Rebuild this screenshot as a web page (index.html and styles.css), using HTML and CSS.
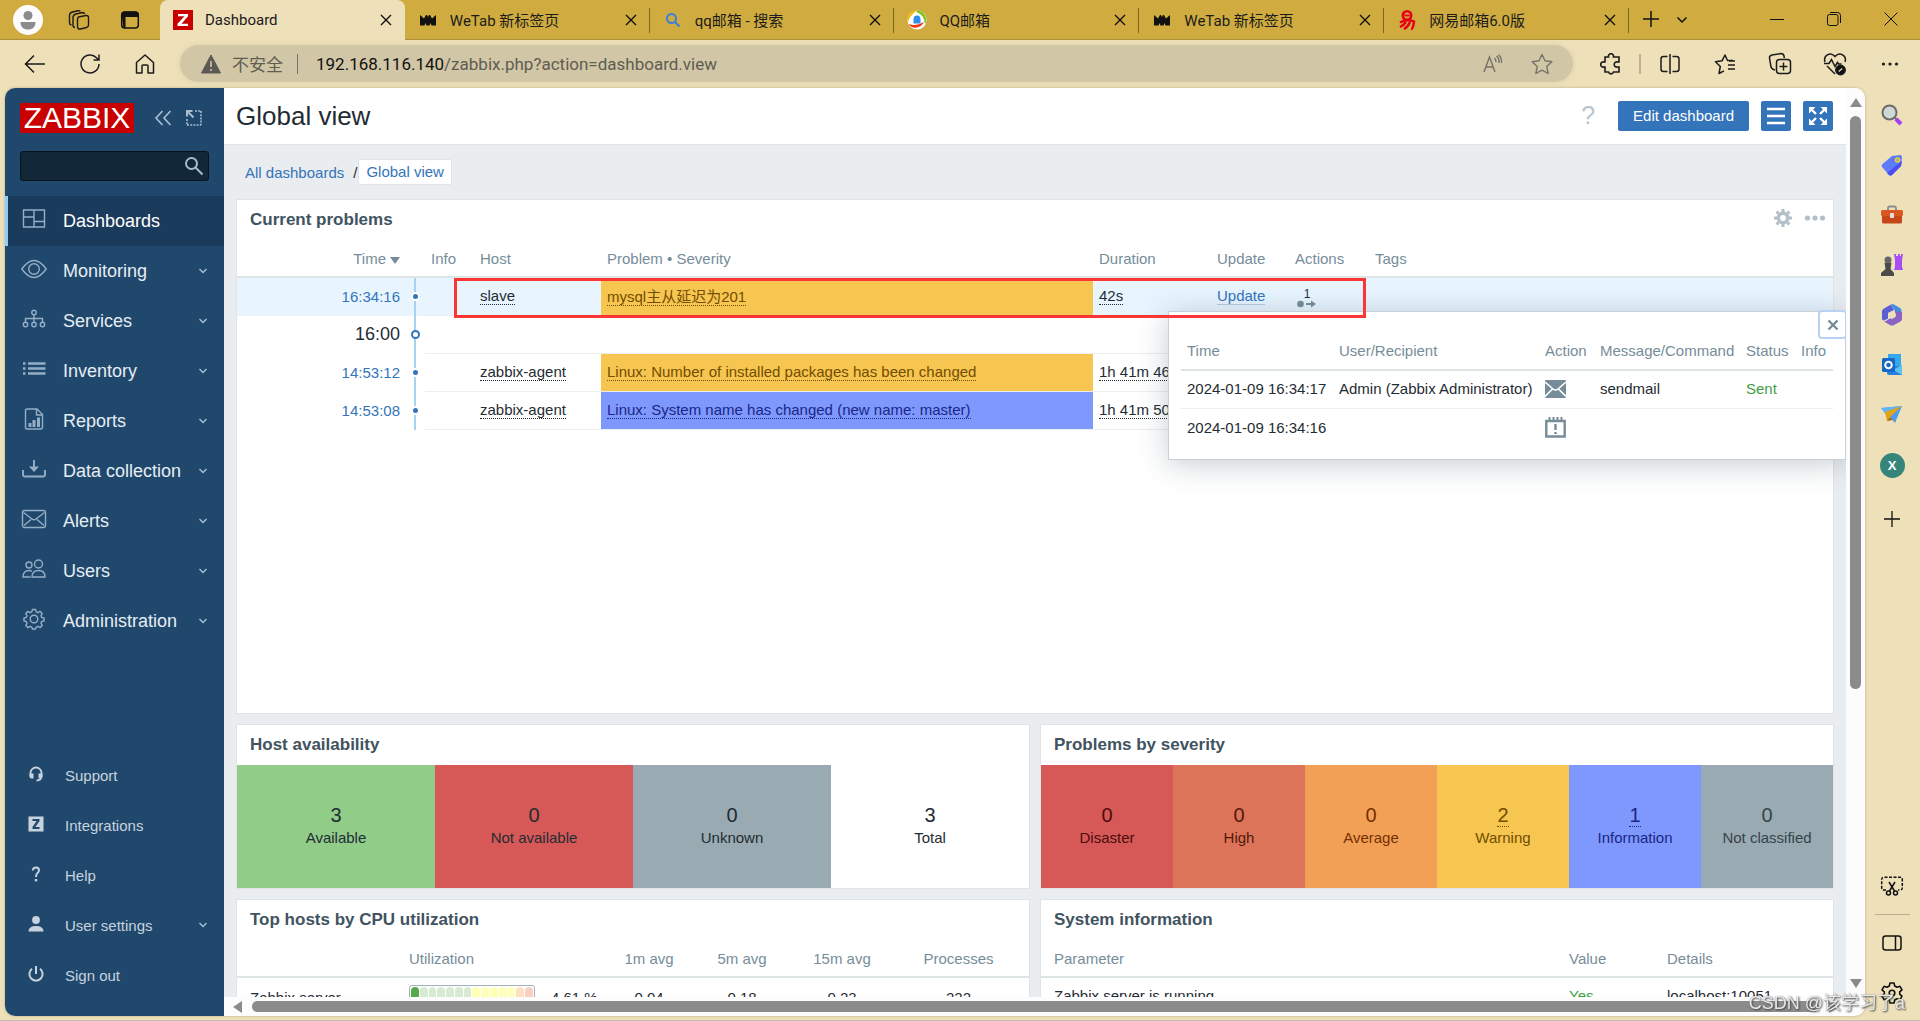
FILE: index.html
```html
<!DOCTYPE html>
<html lang="zh-CN">
<head>
<meta charset="utf-8">
<title>Dashboard</title>
<link rel="stylesheet" href="styles.css">
</head>
<body>
<svg class="defs" aria-hidden="true">
  <symbol id="close" viewBox="0 0 12 12"><path d="M1 1l10 10M11 1L1 11" fill="none" stroke="#111" stroke-width="1.4"/></symbol>
  <symbol id="down" viewBox="0 0 8 8"><path d="M.5 2l3.500 3.500L7.500 2" fill="none" stroke="#a9bfd1" stroke-width="1.4"/></symbol>
  <symbol id="wetab" viewBox="0 0 20 20"><path d="M2 5l4 3.500L8 5h1l1 2 1-2h1l2 3.500L18 5v10.500h-4.500L12.500 13l-1 2.500h-3L7.500 13l-1 2.500H2z" fill="#111"/></symbol>
</svg>

<header class="tabbar">
  <div class="lead">
    <button class="lead-btn" aria-label="Profile"><svg width="30" height="30" viewBox="0 0 30 30"><circle cx="15" cy="15" r="15" fill="#fdfdfd"/><circle cx="15" cy="10.500" r="4.500" fill="#8c8c8c"/><path d="M7.500 17h15c0 5-3 7.500-7.500 7.500S7.500 22 7.500 17z" fill="#8c8c8c"/></svg></button>
    <button class="lead-btn" aria-label="Workspaces"><svg width="22" height="22" viewBox="0 0 22 22" fill="none" stroke="#1b1b1b" stroke-width="1.400"><path d="M10.500 8l7.500-1.500q2.500-.3 2.500 2v7.500q0 2-2 2.500l-6 1.500q-3 .5-3-2.500v-7q0-2 1-2.500z"/><path d="M7 18.500c-1.500 0-2-1-2-2.500V8.500c0-2 1-3 3-3.500l6.500-1.500c1.500 0 2 .8 2.200 1.500M3.500 16c-1.500-.3-2-1-2-2.500V6.500c0-2 1-3 3-3.500L10 1.700c1.200-.2 1.900 0 2.300.6"/></svg></button>
    <button class="lead-btn" aria-label="Tab actions"><svg width="20" height="20" viewBox="0 0 20 20"><rect x="1.700" y="2" width="16.600" height="16" rx="3" fill="none" stroke="#111" stroke-width="1.500"/><path d="M1.500 7V4.500Q1.500 1.500 4.500 1.500h11q3 0 3 3V7zM2 7h3.500v11H3.500Z" fill="#111"/></svg></button>
  </div>
  <nav class="tabs">
    <div class="tab active"><svg class="fav" viewBox="0 0 20 20"><rect width="20" height="20" fill="#c80000"/><path d="M5 4h10v2.300L8.500 13.700H15V16H4.500v-2.300L11.500 6.300H5z" fill="#fff"/></svg><span>Dashboard</span><button class="x" aria-label="Close tab"><svg><use href="#close"/></svg></button></div>
    <div class="tab"><svg class="fav"><use href="#wetab"/></svg><span>WeTab 新标签页</span><button class="x" aria-label="Close tab"><svg><use href="#close"/></svg></button></div>
    <div class="tab"><svg class="fav" viewBox="0 0 20 20"><circle cx="8.500" cy="8.500" r="4.500" fill="none" stroke="#3b7ddd" stroke-width="2"/><path d="M12 12l4.500 4.500" stroke="#3b7ddd" stroke-width="2"/></svg><span>qq邮箱 - 搜索</span><button class="x" aria-label="Close tab"><svg><use href="#close"/></svg></button></div>
    <div class="tab"><svg class="fav" viewBox="0 0 20 20"><circle cx="10" cy="10" r="9.500" fill="#fff"/><path d="M10 .5a9.500 9.500 0 0 0-9 12.500C1.500 8 5 4 10 .5z" fill="#f6b800"/><path d="M10 .5a9.500 9.500 0 0 1 8 14C17.500 8 15 4 9 2z" fill="#7ac520"/><path d="M2 14c5 2 9 1 15-2a9.500 9.500 0 0 1-14 4z" fill="#f03a14"/><path d="M6.500 13.500v-4a3.500 4 0 0 1 7 0v4z" fill="#2f8fe8"/></svg><span>QQ邮箱</span><button class="x" aria-label="Close tab"><svg><use href="#close"/></svg></button></div>
    <div class="tab"><svg class="fav"><use href="#wetab"/></svg><span>WeTab 新标签页</span><button class="x" aria-label="Close tab"><svg><use href="#close"/></svg></button></div>
    <div class="tab"><svg class="fav" viewBox="0 0 20 20" fill="none" stroke="#e60012"><circle cx="10" cy="5.500" r="4.200" stroke-width="2.600"/><path d="M7.500 5.500h5" stroke-width="1.800"/><path d="M3 12.500q7-4 14-1-1 8-3 7.500M9 12q-2 3-6 5M13 12q-2 5-6 7" stroke-width="2.400"/></svg><span>网易邮箱6.0版</span><button class="x" aria-label="Close tab"><svg><use href="#close"/></svg></button></div>
  </nav>
  <div class="newtab">
    <button aria-label="New tab"><svg width="18" height="18" viewBox="0 0 18 18"><path d="M9 1v16M1 9h16" stroke="#111" stroke-width="1.500"/></svg></button>
    <button aria-label="Tab list"><svg width="12" height="12" viewBox="0 0 12 12"><path d="M1.500 4.500L6 9l4.500-4.500" fill="none" stroke="#111" stroke-width="1.500"/></svg></button>
  </div>
  <div class="winctl">
    <button aria-label="Minimize"><svg width="14" height="14" viewBox="0 0 14 14"><path d="M0 7.500h14" stroke="#111"/></svg></button>
    <button aria-label="Restore"><svg width="14" height="14" viewBox="0 0 14 14" fill="none" stroke="#111"><rect x=".5" y="2.500" width="10.500" height="11" rx="2"/><path d="M3 .5h7.500q3 0 3 3V11"/></svg></button>
    <button aria-label="Close"><svg width="14" height="14" viewBox="0 0 14 14"><path d="M.5.5l13 13M13.500.5L.5 13.500" stroke="#111"/></svg></button>
  </div>
</header>

<div class="toolbar">
  <button class="tool" aria-label="Back"><svg width="22" height="22" viewBox="0 0 22 22" fill="none" stroke="#1b1b1b" stroke-width="1.500"><path d="M21 11H2M10 2.500L1.500 11l8.500 8.500"/></svg></button>
  <button class="tool" aria-label="Refresh"><svg width="22" height="22" viewBox="0 0 22 22" fill="none" stroke="#1b1b1b" stroke-width="1.500"><path d="M20 11a9 9 0 1 1-2.500-6.300L20 7M20 1.500V7h-5.500"/></svg></button>
  <button class="tool" aria-label="Home"><svg width="22" height="22" viewBox="0 0 22 22" fill="none" stroke="#1b1b1b" stroke-width="1.500" stroke-linejoin="round"><path d="M2.500 9.500L11 2l8.500 7.500V20H14v-7q0-1-1-1H9q-1 0-1 1v7H2.500z"/></svg></button>
  <div class="address">
    <svg width="20" height="20" viewBox="0 0 20 20"><path d="M10 1l9.500 18H.5z" fill="#5b5a55" stroke="#5b5a55" stroke-linejoin="round"/><path d="M10 7v6M10 15v2" stroke="#d1c6a5" stroke-width="1.600"/></svg>
    <span class="insecure">不安全</span><span class="bar"></span>
    <span class="url"><b>192.168.116.140</b>/zabbix.php?action=dashboard.view</span>
    <button class="in" aria-label="Read aloud"><svg width="20" height="20" viewBox="0 0 20 20" fill="none" stroke="#77736a" stroke-width="1.400"><path d="M1 18L6.500 3 12 18M3 13h7M11.500 4q1.500 1.500 1.500 4M13.500 2q3 2.500 2.500 7M15.500.8q3.500 3.200 3 8"/></svg></button>
    <button class="in" aria-label="Favorite"><svg width="22" height="22" viewBox="0 0 22 22" fill="none" stroke="#77736a" stroke-width="1.400" stroke-linejoin="round"><path d="M11 1.500l3 6.300 6.800 1-5 4.800 1.300 6.900L11 17.200l-6.100 3.300 1.300-6.900-5-4.800 6.800-1z"/></svg></button>
  </div>
  <button class="tool" aria-label="Extensions"><svg width="22" height="22" viewBox="0 0 22 22" fill="none" stroke="#1b1b1b" stroke-width="1.600"><path d="M5 4h3.500a2.600 2.600 0 1 1 5 0H19v5h-1.500a2.600 2.600 0 1 0 0 5H19v5h-5.500a2.600 2.600 0 0 1-5 0H5v-5H4a2.600 2.600 0 1 1 0-5h1z"/></svg></button>
  <span class="tsep"></span>
  <button class="tool" aria-label="Split screen"><svg width="22" height="22" viewBox="0 0 22 22" fill="none" stroke="#1b1b1b" stroke-width="1.500"><path d="M11 1v20M8.500 3.500h-4Q2 3.500 2 6v10q0 2.500 2.500 2.500h4M13.500 3.500h4Q20 3.500 20 6v10q0 2.500-2.500 2.500h-4"/></svg></button>
  <button class="tool" aria-label="Favorites"><svg width="22" height="22" viewBox="0 0 22 22" fill="none" stroke="#1b1b1b" stroke-width="1.500" stroke-linejoin="round"><path d="M19 7.500h-5.500L11 2 8 7.800l-6.500 1 4.800 4.700L5 20.500l5-2.700M14 12h7M14 16h7M15 8h6"/></svg></button>
  <button class="tool" aria-label="Collections"><svg width="24" height="24" viewBox="0 0 24 24" fill="none" stroke="#1b1b1b" stroke-width="1.500"><path d="M7 18l-2-.7Q3.500 16.500 3 15L1.500 6Q1.300 3.500 4 3l9-1.500q2.500 0 3 2.500l.3 2"/><rect x="8.500" y="7.500" width="14" height="14" rx="3"/><path d="M15.500 10.500v8M11.500 14.500h8"/></svg></button>
  <button class="tool" aria-label="Browser essentials"><svg width="24" height="24" viewBox="0 0 24 24" fill="none" stroke="#1b1b1b" stroke-width="1.500"><path d="M2 10C0 4 7-1 12 4.500 17-1 24 4 22 10M1 11.500h5l2.500-4 3.500 7 2.500-4 1 1.500h3M4 14l8 8"/><circle cx="17.500" cy="18" r="4.700" fill="#111"/><path d="M15.800 19.500l3.400-3" stroke="#eee1ba" stroke-width="1.200"/></svg></button>
  <button class="tool" aria-label="More"><svg width="18" height="18" viewBox="0 0 18 18" fill="#1b1b1b"><circle cx="2.500" cy="9" r="1.600"/><circle cx="9" cy="9" r="1.600"/><circle cx="15.500" cy="9" r="1.600"/></svg></button>
</div>

<div class="window">
  <div class="page">
    <aside class="sidebar">
      <div class="brand"><a class="logo" href="#">ZABBIX</a>
        <button aria-label="Collapse sidebar"><svg width="18" height="16" viewBox="0 0 18 16" fill="none" stroke="#a8bccd" stroke-width="1.700"><path d="M8.500 1L2 8l6.500 7M16.500 1L10 8l6.500 7"/></svg></button>
        <button aria-label="Hide sidebar"><svg width="16" height="16" viewBox="0 0 16 16" fill="none" stroke="#a8bccd" stroke-width="1.600"><path d="M9 1h6M15 1v14M1 15h14M1 9v6" stroke-dasharray="2 1.200"/><path d="M1.500 1.500l6 6M1 6.500V1h5.500" stroke-width="2"/></svg></button>
      </div>
      <div class="search"><input type="text" aria-label="Search"><svg width="20" height="20" viewBox="0 0 20 20" fill="none" stroke="#a8bccd" stroke-width="2"><circle cx="7.500" cy="7.500" r="5.500"/><path d="M11.500 11.500l7 7"/></svg></div>
      <nav class="menu">
        <a class="on" href="#"><svg viewBox="0 0 26 22"><path d="M2.500 2h21v17h-21zM13 2v17M2.500 9H13M13 13.500h10.500"/></svg><span>Dashboards</span></a>
        <a href="#"><svg viewBox="0 0 26 22"><path d="M.8 11Q13-6 25.200 11 13 28 .8 11z"/><circle cx="13" cy="11" r="5.300"/></svg><span>Monitoring</span><svg class="chev"><use href="#down"/></svg></a>
        <a href="#"><svg viewBox="0 0 26 22"><circle cx="13" cy="4.500" r="2.200"/><circle cx="4.500" cy="16.500" r="2.200"/><circle cx="13" cy="16.500" r="2.200"/><circle cx="21.500" cy="16.500" r="2.200"/><path d="M13 7v7M4.500 14v-3.500h17V14"/></svg><span>Services</span><svg class="chev"><use href="#down"/></svg></a>
        <a href="#"><svg viewBox="0 0 26 22"><path d="M2 5.500h2.500M2 10.500h2.500M2 15.500h2.500M7 5.500h17.500M7 10.500h17.500M7 15.500h17.500" stroke-width="2.400"/></svg><span>Inventory</span><svg class="chev"><use href="#down"/></svg></a>
        <a href="#"><svg viewBox="0 0 26 22"><path d="M6 1h10l5.500 5.500V19q0 2-2 2H6q-1.500 0-1.500-2V3Q4.500 1 6 1zM15.500 1v6h6"/><path d="M9 19v-4M13 19v-7M17.500 19V9.500" stroke-width="3"/></svg><span>Reports</span><svg class="chev"><use href="#down"/></svg></a>
        <a href="#"><svg viewBox="0 0 26 22"><path d="M2 12v5q0 1.500 1.500 1.500h19q1.500 0 1.500-1.500v-5M13 2v10" stroke-width="1.900"/><path d="M8 8.500h10L13 14z" fill="#94aec6" stroke="none"/></svg><span>Data collection</span><svg class="chev"><use href="#down"/></svg></a>
        <a href="#"><svg viewBox="0 0 26 22"><rect x="1.500" y="2.500" width="23" height="17" rx="2"/><path d="M2.500 4.500l8.500 6.500q2 1.500 4 0l8.500-6.500M3 17.500l7-6M23 17.500l-7-6"/></svg><span>Alerts</span><svg class="chev"><use href="#down"/></svg></a>
        <a href="#"><svg viewBox="0 0 26 22"><circle cx="17.500" cy="6" r="4"/><circle cx="8" cy="7" r="3"/><path d="M11 19q0-6.500 6.500-6.500T24 19zM9.500 19H2q0-6.500 6-6.500 1.500 0 3 .8"/></svg><span>Users</span><svg class="chev"><use href="#down"/></svg></a>
        <a href="#"><svg viewBox="0 0 26 22"><path d="M11.500 1.500h3l.7 2.300 1.700.8 2.200-1.200 2.100 2.100L20 7.700l.7 1.600 2.300.7v3l-2.300.7-.7 1.600 1.200 2.200-2.100 2.100-2.200-1.200-1.700.8-.7 1.800h-3l-.7-1.800-1.700-.8-2.200 1.200-2.100-2.100L6 15.300l-.7-1.600L3 13v-3l2.300-.7L6 7.700 4.800 5.500l2.100-2.100 2.200 1.200 1.700-.8z"/><circle cx="13" cy="11" r="3.800"/></svg><span>Administration</span><svg class="chev"><use href="#down"/></svg></a>
      </nav>
      <nav class="menu sub">
        <a href="#"><svg viewBox="0 0 16 16"><path d="M2.500 10V7a5.500 5.500 0 0 1 11 0v3q0 4.500-5 4.500" fill="none" stroke="#c6d3de" stroke-width="1.800"/><path d="M1.500 7.500h4v5h-2q-2 0-2-2zM10.500 7.500h4v3q0 2-2 2h-2z"/></svg><span>Support</span></a>
        <a href="#"><svg viewBox="0 0 16 16"><rect x=".5" y=".5" width="15" height="15"/><path d="M4.500 3h7v2L7.300 11h4.200v2h-7v-2L8.700 5H4.500z" fill="#20486d"/></svg><span>Integrations</span></a>
        <a href="#"><svg viewBox="0 0 16 16"><path d="M4.800 4.500Q5 1.500 8 1.500t3 2.800q0 1.500-1.500 2.700T8 11" fill="none" stroke="#c6d3de" stroke-width="2"/><rect x="6.800" y="13" width="2.400" height="2.400"/></svg><span>Help</span></a>
        <a href="#"><svg viewBox="0 0 16 16"><circle cx="8" cy="4" r="3.900"/><path d="M.5 15.500q0-5.500 7.500-5.500t7.500 5.500z"/></svg><span>User settings</span><svg class="chev"><use href="#down"/></svg></a>
        <a href="#"><svg viewBox="0 0 16 16" fill="none" stroke="#c6d3de" stroke-width="2"><path d="M8 0v8" fill="none"/><path d="M4 2.800a6.600 6.600 0 1 0 8 0" fill="none"/></svg><span>Sign out</span></a>
      </nav>
    </aside>

    <div class="scroller">
      <main class="content">
        <header class="titlebar">
          <h1>Global view</h1>
          <a class="help" href="#">?</a>
          <button class="btn">Edit dashboard</button>
          <button class="btn sq" aria-label="Actions"><svg width="20" height="20" viewBox="0 0 20 20"><path d="M1 3h18M1 10h18M1 17h18" stroke="#fff" stroke-width="2.400"/></svg></button>
          <button class="btn sq" aria-label="Kiosk mode"><svg width="20" height="20" viewBox="0 0 20 20" fill="#fff" stroke="#fff" stroke-width="2.400"><path d="M2 2l6 6M18 2l-6 6M2 18l6-6M18 18l-6-6"/><path d="M1 1h6.500L1 7.500zM19 1h-6.500L19 7.500zM1 19h6.500L1 12.500zM19 19h-6.500l6.500-6.500z" stroke="none"/></svg></button>
        </header>
        <nav class="crumbs"><a href="#">All dashboards</a><span>/</span><a class="cur" href="#">Global view</a></nav>

        <div class="grid">
          <section class="widget problems">
            <header><h2>Current problems</h2>
              <button aria-label="Edit"><svg width="18" height="18" viewBox="0 0 18 18"><circle cx="9" cy="9" r="4.700" fill="none" stroke="#b4c0c9" stroke-width="3.600"/><path d="M9 0v3M9 15v3M0 9h3M15 9h3M2.600 2.600l2 2M13.400 13.400l2 2M2.600 15.400l2-2M13.400 4.600l2-2" stroke="#b4c0c9" stroke-width="3"/></svg></button>
              <button aria-label="More"><svg width="22" height="18" viewBox="0 0 22 18" fill="#b4c0c9"><circle cx="3.500" cy="9" r="2.600"/><circle cx="11" cy="9" r="2.600"/><circle cx="18.500" cy="9" r="2.600"/></svg></button>
            </header>
            <table class="ptable">
              <colgroup><col class="c-time"><col class="c-line"><col class="c-info"><col class="c-host"><col class="c-prob"><col class="c-dur"><col class="c-upd"><col class="c-act"><col></colgroup>
              <thead><tr><th class="r">Time<span class="sort"></span></th><th></th><th>Info</th><th>Host</th><th>Problem • Severity</th><th>Duration</th><th>Update</th><th>Actions</th><th>Tags</th></tr></thead>
              <tbody>
                <tr class="hover"><td class="r"><a href="#">16:34:16</a></td><td class="line"><i></i></td><td></td><td><a class="dot" href="#">slave</a></td><td class="warning"><a class="dot" href="#">mysql主从延迟为201</a></td><td><a class="dot" href="#">42s</a></td><td><a class="solid" href="#">Update</a></td><td><button class="act"><span>1</span><svg width="20" height="8" viewBox="0 0 20 8" fill="#768d99"><circle cx="3.500" cy="4" r="3.300"/><path d="M9 3h5V.5L19 4l-5 3.500V5H9z"/></svg></button></td><td></td></tr>
                <tr><td class="r hour">16:00</td><td class="line"><i class="ring"></i></td><td></td><td></td><td></td><td></td><td></td><td></td><td></td></tr>
                <tr><td class="r"><a href="#">14:53:12</a></td><td class="line"><i></i></td><td></td><td><a class="dot" href="#">zabbix-agent</a></td><td class="warning"><a class="dot" href="#">Linux: Number of installed packages has been changed</a></td><td><a class="dot" href="#">1h 41m 46s</a></td><td></td><td></td><td></td></tr>
                <tr><td class="r"><a href="#">14:53:08</a></td><td class="line"><i></i></td><td></td><td><a class="dot" href="#">zabbix-agent</a></td><td class="info"><a class="dot" href="#">Linux: System name has changed (new name: master)</a></td><td><a class="dot" href="#">1h 41m 50s</a></td><td></td><td></td><td></td></tr>
              </tbody>
            </table>
          </section>

          <section class="widget">
            <header><h2>Host availability</h2></header>
            <div class="cells">
              <div class="ok"><b>3</b><span>Available</span></div>
              <div class="bad"><b>0</b><span>Not available</span></div>
              <div class="unk"><b>0</b><span>Unknown</span></div>
              <div><b>3</b><span>Total</span></div>
            </div>
          </section>
          <section class="widget">
            <header><h2>Problems by severity</h2></header>
            <div class="cells">
              <div class="disaster"><b>0</b><span>Disaster</span></div>
              <div class="high"><b>0</b><span>High</span></div>
              <div class="average"><b>0</b><span>Average</span></div>
              <div class="warning"><b><a class="dot" href="#">2</a></b><span>Warning</span></div>
              <div class="info"><b><a class="dot" href="#">1</a></b><span>Information</span></div>
              <div class="unk nc"><b>0</b><span>Not classified</span></div>
            </div>
          </section>
          <section class="widget">
            <header><h2>Top hosts by CPU utilization</h2></header>
            <table class="hosts">
              <colgroup><col class="h-name"><col class="h-util"><col class="h-val"><col class="h-1"><col class="h-5"><col class="h-15"><col></colgroup>
              <thead><tr><th></th><th>Utilization</th><th></th><th class="c">1m avg</th><th class="c">5m avg</th><th class="c">15m avg</th><th class="c last">Processes</th></tr></thead>
              <tbody><tr><td>Zabbix server</td><td><div class="gauge"><i class="g1"></i><i class="g"></i><i class="g"></i><i class="g"></i><i class="g"></i><i class="g"></i><i class="g"></i><i class="y"></i><i class="y"></i><i class="y"></i><i class="y"></i><i class="y"></i><i class="o"></i><i class="d"></i></div></td><td>4.61 %</td><td class="c">0.04</td><td class="c">0.18</td><td class="c">0.23</td><td class="c last">222</td></tr></tbody>
            </table>
          </section>
          <section class="widget">
            <header><h2>System information</h2></header>
            <table class="sys">
              <colgroup><col><col class="s-val"><col class="s-det"></colgroup>
              <thead><tr><th>Parameter</th><th>Value</th><th>Details</th></tr></thead>
              <tbody><tr><td>Zabbix server is running</td><td class="green">Yes</td><td>localhost:10051</td></tr></tbody>
            </table>
          </section>
        </div>

        <div class="popup" role="dialog" aria-label="Actions">
          <button class="pclose" aria-label="Close"><svg width="12" height="12" viewBox="0 0 12 12"><path d="M1.500 1.500l9 9M10.500 1.500l-9 9" stroke="#768d99" stroke-width="2.400"/></svg></button>
          <table>
            <colgroup><col class="p-time"><col class="p-user"><col class="p-act"><col class="p-msg"><col class="p-st"><col></colgroup>
            <thead><tr><th>Time</th><th>User/Recipient</th><th>Action</th><th>Message/Command</th><th>Status</th><th>Info</th></tr></thead>
            <tbody>
              <tr><td>2024-01-09 16:34:17</td><td>Admin (Zabbix Administrator)</td><td><svg width="21" height="18" viewBox="0 0 21 18"><rect width="21" height="18" rx="1" fill="#768d99"/><path d="M0 2l8 7q2.500 2 5 0l8-7M0 16.500L7.500 9M21 16.500L13.500 9" fill="none" stroke="#fff" stroke-width="1.600"/></svg></td><td>sendmail</td><td class="green">Sent</td><td></td></tr>
              <tr><td>2024-01-09 16:34:16</td><td></td><td><svg width="21" height="22" viewBox="0 0 21 22"><path d="M1.300 5h18.400v15.500H1.300z" fill="none" stroke="#768d99" stroke-width="2.400"/><path d="M4.500 1v4M8.500 1v4M12.500 1v4M16.500 1v4" stroke="#768d99" stroke-width="2"/><path d="M10.500 8v6M10.500 16v2" stroke="#768d99" stroke-width="2.400"/></svg></td><td></td><td></td><td></td></tr>
            </tbody>
          </table>
        </div>
        <div class="mark"></div>
      </main>
      <div class="vbar"><i class="up"></i><div class="vtrack"><i></i></div><i class="dn"></i></div>
      <div class="hbar"><i class="lt"></i><i class="thumb"></i><i class="rt"></i></div>
    </div>
  </div>

  <aside class="rail">
    <button aria-label="Search"><svg viewBox="0 0 24 24"><path d="M14 14l2.500 2.500" stroke="#777" stroke-width="2"/><path d="M16 16l5 5" stroke="#a63df2" stroke-width="4"/><circle cx="9.500" cy="9.500" r="7" fill="#cfd8d6" stroke="#6b6b6b" stroke-width="2"/></svg></button>
    <button aria-label="Shopping"><svg viewBox="0 0 24 24"><path d="M12 3l8-1q2 0 2 2l-1 9-9 9q-1.500 1-3 0l-7-8q-1-1.500.5-3z" fill="#5d7cfb"/><path d="M22 8l-1 5-9 9q-1.500 1-3 0l-2-2z" fill="#4b4df0"/><circle cx="17.500" cy="7" r="2" fill="#7a9bff" stroke="#f5d020" stroke-width="1.500"/></svg></button>
    <button aria-label="Tools"><svg viewBox="0 0 24 24"><path d="M8 7V5q0-1.500 1.500-1.500h5Q16 3.500 16 5v2" fill="none" stroke="#8c8c8c" stroke-width="1.800"/><rect x="2" y="11" width="20" height="9.500" rx="1.500" fill="#c5471a"/><rect x="1" y="7" width="22" height="6" rx="1.500" fill="#d9581f"/><rect x="10" y="10" width="4" height="5" rx="1" fill="#e0e0e0"/></svg></button>
    <button aria-label="Games"><svg viewBox="0 0 24 24"><path d="M14 1h2v2h2V1h2v2h1V1h2l-1 6v7l1 3h-9l1-3V7z" fill="#a64df5"/><circle cx="8" cy="7" r="3.500" fill="#666"/><path d="M4.500 10h7l-1 6 3.500 4v3H1v-3l4.500-4z" fill="#4b4b4b"/></svg></button>
    <button aria-label="Microsoft 365"><svg viewBox="0 0 24 24"><path d="M11 1.500q1.500-.8 3 0l6 3.500q1.500 1 1.500 2.500V15l-6-4-1-4z" fill="#3f8fe0"/><path d="M11 1.500L4 5.500Q2 6.500 2 8.500v7q0 2 2 2l4-2V10l6-3z" fill="#5b5fd6"/><path d="M22 9v6.500q0 2-1.500 3L14 22q-2 1-4 0l-6-3.500q2 0 4-2l8-3.500-1-5z" fill="#8c62c4"/><path d="M12 8l3.500 2v4L12 16l-3.500-2v-4z" fill="#eee1ba"/></svg></button>
    <button aria-label="Outlook"><svg viewBox="0 0 24 24"><rect x="8" y="1" width="13" height="12" fill="#36a9ee"/><path d="M7 13h15v9H9q-2 0-2-2z" fill="#2a7fdc"/><path d="M22 12v10l-9-5z" fill="#5bc4f7"/><rect x="2" y="5" width="13" height="14" rx="1.500" fill="#1668c7"/><circle cx="8.500" cy="12" r="3.300" fill="none" stroke="#fff" stroke-width="2"/></svg></button>
    <button aria-label="Drop"><svg viewBox="0 0 24 24"><path d="M1 5l21-2-7 17-5-6z" fill="#4c9bf0"/><path d="M22 3L6 12 1 5z" fill="#63b5f7"/><path d="M22 3L5 9l2 9 3-4z" fill="#e0a414"/><path d="M7 18l3-4 3 3z" fill="#a36a08"/></svg></button>
    <button class="avatar">X</button>
    <button class="add" aria-label="Add"><svg viewBox="0 0 24 24"><path d="M12 4v16M4 12h16" stroke="#111" stroke-width="1.300"/></svg></button>
    <span class="spring"></span>
    <button aria-label="Screenshot"><svg viewBox="0 0 24 24" fill="none" stroke="#111" stroke-width="1.500"><path d="M6 16H4q-2.300 0-2.300-2.300V5.500Q1.700 3.200 4 3.200h16q2.300 0 2.300 2.300v8.200Q22.300 16 20 16h-2" stroke-dasharray="3 1.500"/><path d="M9 8l5.500 9M15 8l-5.500 9"/><circle cx="8.500" cy="19" r="2"/><circle cx="15.500" cy="19" r="2"/></svg></button>
    <hr>
    <button aria-label="Sidebar"><svg viewBox="0 0 24 24" fill="none" stroke="#111" stroke-width="1.500"><rect x="3" y="5" width="18" height="14" rx="2.500"/><path d="M15.500 5v14"/></svg></button>
    <button aria-label="Settings"><svg viewBox="0 0 24 24" fill="none" stroke="#111" stroke-width="1.600" stroke-linejoin="round"><path d="M10 2h4l.7 3 2.300 1.300 3-1 2 3.500-2.300 2v2.400l2.300 2-2 3.500-3-1-2.300 1.300-.7 3h-4l-.7-3L7 17.700l-3 1-2-3.500 2.300-2v-2.400L2 8.800l2-3.500 3 1L9.300 5z"/><circle cx="12" cy="12" r="2.800"/></svg></button>
  </aside>
</div>
<div class="watermark">CSDN @该学习了a</div>
</body>
</html>
```

FILE: styles.css
```css
* { box-sizing: border-box; }
body { margin: 0; height: 100vh; display: flex; flex-direction: column; overflow: hidden; background: #eee1ba; font-family: "Liberation Sans", Arial, "Noto Sans CJK SC", sans-serif; font-size: 15px; color: #1f2c33; border-bottom: 1px solid #bdbdbd; }
button { border: 0; padding: 0; background: none; font: inherit; color: inherit; display: flex; align-items: center; justify-content: center; }
a { color: #3474ba; text-decoration: none; }
svg { display: block; flex: none; }
h1, h2 { margin: 0; }
.defs { position: absolute; width: 0; height: 0; }

/* browser tabs */
.tabbar { flex: none; height: 40px; display: flex; background: #d0ac40; box-shadow: inset 0 -2px 1px -1px #a98c33; font-family: Roboto, "Noto Sans CJK SC", sans-serif; color: #1b1b1b; }
.lead { width: 160px; display: flex; align-items: center; padding-left: 2px; }
.lead-btn { width: 51px; height: 40px; }
.tabs { display: flex; flex: 0 1 1469px; min-width: 0; }
.tab { flex: 1; min-width: 0; display: flex; align-items: center; gap: 12px; padding: 0 13px 1px; position: relative; }
.tab span { flex: 1; white-space: nowrap; overflow: hidden; }
.tab:not(.active)::after { content: ""; position: absolute; right: 0; top: 8px; height: 25px; width: 1px; background: #7c6726; }
.tab.active { background: #eee1ba; border-radius: 8px 8px 0 0; }
.fav { width: 20px; height: 20px; }
.x svg { width: 12px; height: 12px; }
.newtab { display: flex; align-items: center; gap: 16px; padding: 0 13px 2px; }
.winctl { display: flex; margin-left: auto; padding-right: 1px; }
.winctl button { width: 57px; height: 38px; }

/* address bar */
.toolbar { flex: none; height: 48px; display: flex; align-items: center; padding: 0 3px 1px 7px; }
.tool { width: 55px; height: 40px; }
.address { flex: 1; height: 37px; border-radius: 19px; background: #d1c6a5; box-shadow: 0 0 4px 2px #e4d7b0; margin: 0 10px 0 8px; padding: 0 20px 0 21px; display: flex; align-items: center; color: #5f5c53; font-family: Roboto, "Noto Sans CJK SC", sans-serif; font-size: 17px; }
.insecure { margin: 0 14px 0 11px; }
.bar { width: 1px; height: 20px; background: #77736a; margin-right: 18px; }
.url { flex: 1; }
.url b { font-weight: 400; color: #111; }
.in { margin-left: 28px; }
.tsep { width: 2px; height: 20px; margin: 0 1px; background: #bdb291; }

.window { flex: 1; min-height: 0; display: flex; padding: 0 0 4px 5px; }
.page { flex: 1; min-width: 0; display: flex; border-radius: 10px; overflow: hidden; background: #fcfcfc; box-shadow: 0 0 3px #b9ad87; }

/* Zabbix menu */
.sidebar { width: 219px; flex: none; background: #20486d; display: flex; flex-direction: column; }
.brand { display: flex; align-items: center; padding: 15px 22px 0 15px; }
.logo { width: 114px; height: 30px; line-height: 30px; background: #c80000; color: #fff; font-size: 30px; text-align: center; margin-right: auto; }
.brand button { margin-left: 14px; }
.search { display: flex; align-items: center; margin: 18px 15px 15px; height: 30px; background: #122737; border: 1px solid #07131d; border-radius: 3px; padding-right: 4px; }
.search input { flex: 1; min-width: 0; height: 100%; background: none; border: 0; outline: 0; color: #fff; }
.menu { display: flex; flex-direction: column; }
.menu a { height: 50px; display: flex; align-items: center; gap: 16px; padding: 0 17px 0 13px; border-left: 3px solid transparent; color: #e6edf3; font-size: 18px; }
.menu a > svg:first-child { width: 26px; height: 22px; fill: none; stroke: #94aec6; stroke-width: 1.4; margin-bottom: 4px; }
.menu .on { background: #1b3b5d; border-color: #8ccfff; color: #fff; }
.menu .chev { width: 8px; height: 8px; margin-left: auto; }
.sub { margin-top: auto; margin-bottom: 16px; }
.sub a { font-size: 15px; gap: 21px; padding-left: 20px; color: #c6d3de; }
.menu.sub a > svg:first-child { width: 16px; height: 16px; fill: #c6d3de; stroke: none; margin-bottom: 3px; }
.menu.sub a:last-child > svg { stroke: #c6d3de; stroke-width: 2; fill: none; }

/* scrolling area */
.scroller { flex: 1; min-width: 0; display: grid; grid-template: minmax(0, 1fr) 19px / minmax(0, 1fr) 19px; }
.content { position: relative; overflow: hidden; background: #e9edf0; }
.vbar { display: flex; flex-direction: column; align-items: center; padding: 10px 0 9px; background: #fcfcfc; }
.up, .dn, .lt, .rt { border: 6px solid transparent; }
.up { border-bottom: 9px solid #8b8b8b; border-top: 0; }
.dn { border-top: 9px solid #8b8b8b; border-bottom: 0; }
.vtrack { flex: 1; width: 11px; padding: 9px 0 8px; }
.vtrack i { display: block; height: 67%; background: #8b8b8b; border-radius: 6px; }
.hbar { display: flex; align-items: center; gap: 10px; padding: 0 8px 0 9px; background: #fcfcfc; }
.lt { border-right: 9px solid #8b8b8b; border-left: 0; }
.rt { border-left: 9px solid #8b8b8b; border-right: 0; }
.thumb { flex: 1; height: 11px; background: #8b8b8b; border-radius: 6px; }

.titlebar { height: 57px; display: flex; align-items: center; padding: 0 13px 1px 12px; background: #fff; border-bottom: 1px solid #dfe4e7; }
h1 { font-size: 26px; font-weight: 400; margin-right: auto; padding-top: 2px; }
.help { color: #b9c5cd; font-size: 25px; margin-right: 23px; }
.btn { height: 30px; padding: 0 15px; background: #3474ba; color: #fff; border-radius: 2px; }
.sq { width: 30px; padding: 0; margin-left: 12px; }
.crumbs { display: flex; align-items: center; padding: 14px 21px; }
.crumbs span { margin-left: 9px; }
.crumbs .cur { height: 26px; line-height: 24px; padding: 0 7px; margin-left: 1px; background: #fff; border: 1px solid #dfe4e7; border-radius: 2px; }

/* widgets */
.grid { display: grid; grid-template-columns: 1fr 1fr; gap: 10px; padding: 0 12px; }
.widget { background: #fff; border: 1px solid #dfe4e7; min-width: 0; }
.widget header { height: 40px; display: flex; align-items: center; padding: 0 7px 0 13px; }
.widget header button { margin-left: 12px; height: 30px; margin-bottom: 4px; }
h2 { font-size: 17px; font-weight: 700; color: #41535f; margin-right: auto; }
.problems { grid-column: 1 / -1; height: 515px; }
table { width: 100%; table-layout: fixed; border-collapse: separate; border-spacing: 0; }
th, td { height: 38px; padding: 0 6px; text-align: left; font-weight: 400; white-space: nowrap; border-bottom: 1px solid #ebeef0; }
td { padding-bottom: 2px; }
th { color: #768d99; border-bottom: 2px solid #dfe4e7; }
.r { text-align: right; }
.ptable tbody .r { border: 0; }
.c { text-align: center; }
.c-time { width: 169px; } .c-line { width: 19px; } .c-info { width: 49px; } .c-host { width: 127px; }
.c-prob { width: 492px; } .c-dur { width: 118px; } .c-upd { width: 78px; } .c-act { width: 80px; }
.sort { display: inline-block; border: 5px solid transparent; border-top: 7px solid #768d99; border-bottom: 0; margin-left: 4px; }
.hover td { background: #e8f5ff; }
.hour { font-size: 18px; }
.ptable .line { border: 0; padding: 0 0 2px; background-image: linear-gradient(#a8d3ef, #a8d3ef); background-size: 2px 100%; background-position: 8px 0; background-repeat: no-repeat; }
.line i { display: block; width: 9px; height: 9px; margin-left: 5px; border: 2px solid #fff; border-radius: 50%; background: #3474ba; }
.line .ring { border-color: #3474ba; background: #fff; }
.dot { color: inherit; border-bottom: 1px dotted currentColor; }
.solid { border-bottom: 1px solid #b5cbe2; }
.ptable .warning, .ptable .info { background-clip: padding-box; }
.ptable .warning, .warning { background-color: #f6c651; color: #734d00; }
.ptable .info, .info { background-color: #7e98fe; color: #1a2784; }
.act { flex-direction: column; width: 20px; margin: 4px 0 0 2px; }
.act span { font-size: 12px; line-height: 12px; color: #1f2c33; }
.green { color: #429e47; }

.cells { display: flex; height: 123px; }
.cells div { flex: 1; display: flex; flex-direction: column; align-items: center; justify-content: center; padding-bottom: 1px; }
.cells b { font-weight: 400; font-size: 20px; line-height: 24px; }
.cells span { line-height: 22px; }
.ok { background: #91cd89; }
.bad, .disaster { background: #d65957; }
.unk { background: #9aaab2; }
.disaster { color: #4b0c0c; }
.high { background: #dc7459; color: #52190b; }
.average { background: #f3a057; color: #733100; }
.nc { color: #35434b; }

.h-name { width: 166px; } .h-util { width: 142px; } .h-val { width: 57px; } .h-1 { width: 94px; } .h-5 { width: 92px; } .h-15 { width: 108px; }
.hosts td { height: 42px; }
.hosts th:first-child, .hosts td:first-child, .sys th:first-child, .sys td:first-child { padding-left: 13px; }
.hosts .last { padding-right: 14px; }
.gauge { width: 126px; height: 25px; border: 1px solid #9fb0bb; border-radius: 3px; padding: 1px; display: flex; gap: 1px; }
.gauge i { flex: 1; border-radius: 4px; background: #d6ebd2; }
.gauge .g1 { background: #56aa4c; }
.gauge .y { background: #ffffb5; }
.gauge .o { background: #fde0c0; }
.gauge .d { background: #f9cfc2; }
.s-val { width: 98px; } .s-det { width: 172px; }

/* action details */
.popup { position: absolute; top: 223px; right: 0; width: 678px; background: #fff; border: 1px solid #c8d0d5; padding: 21px 12px 12px; box-shadow: 0 4px 28px rgba(50, 75, 90, .28); }
.popup th { padding-bottom: 2px; }
.popup tbody tr:last-child td { border: 0; }
.pclose { position: absolute; top: 0; right: 0; width: 25px; height: 25px; border-radius: 2px; background: #fff; outline: 2px solid #b9d2f3; }
.p-time { width: 152px; } .p-user { width: 206px; } .p-act { width: 55px; } .p-msg { width: 146px; } .p-st { width: 55px; }
.mark { position: absolute; left: 230px; top: 190px; width: 912px; height: 40px; border: 3px solid #fd3535; }

/* browser side rail */
.rail { width: 55px; flex: none; display: flex; flex-direction: column; align-items: center; padding: 2px 1px 0 0; margin-bottom: -2px; }
.rail button { width: 40px; height: 50px; }
.rail svg { width: 24px; height: 24px; }
.rail .avatar { width: 25px; height: 25px; margin: 13px 0 12px; border-radius: 50%; background: #35857a; color: #fff; font-weight: 700; font-size: 13px; }
.rail .add { margin-top: 4px; }
.spring { flex: 1; }
.rail hr { width: 35px; margin: 3px 0; border: 0; border-top: 1px solid #b9ad8b; }
.watermark { position: fixed; right: 15px; bottom: 7px; font-family: "Liberation Sans", "Noto Sans CJK SC", sans-serif; font-size: 18px; line-height: 22px; color: rgba(255, 255, 255, .85); text-shadow: 1px 1px 2px #444, 0 0 1px #777; }
```
